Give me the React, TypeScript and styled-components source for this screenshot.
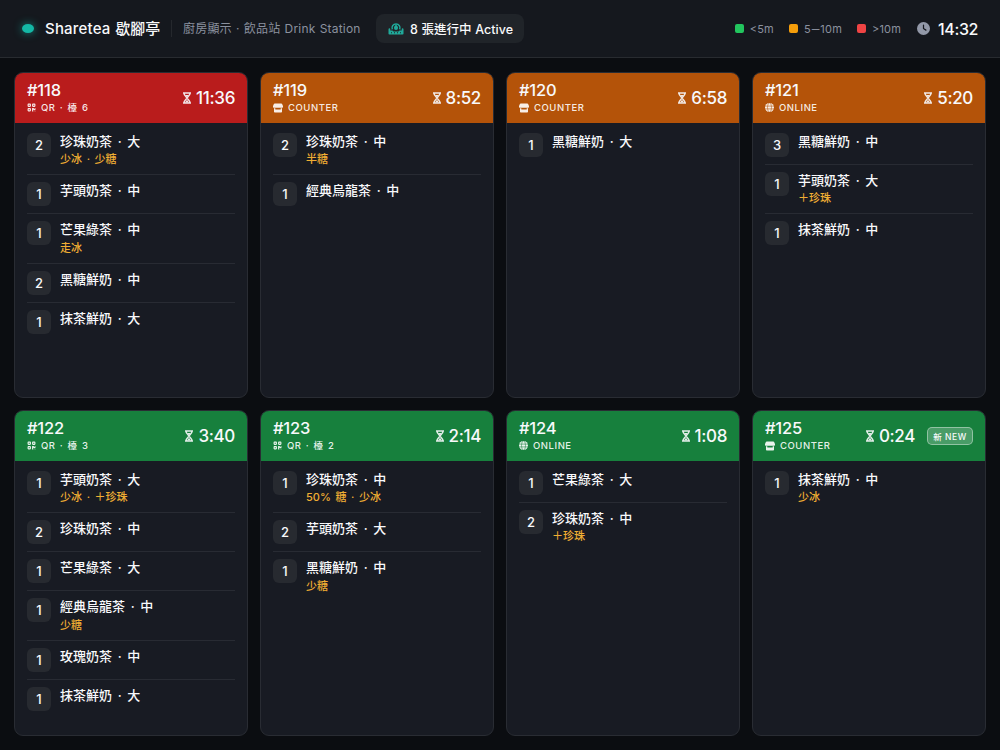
import React from "react";
import styled, { createGlobalStyle } from "styled-components";
import { FaClock, FaQrcode } from "react-icons/fa6";

const latin = 'Inter, "Noto Sans CJK TC", sans-serif';

const GlobalStyle = createGlobalStyle`
  *, *::before, *::after { box-sizing: border-box; }
  body {
    margin: 0;
    background: #0b0d11;
    color: #f8f9fb;
    font-family: ${latin};
    -webkit-font-smoothing: antialiased;
  }
`;

const Page = styled.div`
  height: 750px;
  width: 1000px;
  display: flex;
  flex-direction: column;
  overflow: hidden;
`;

const TopBar = styled.header`
  height: 58px;
  flex: none;
  display: flex;
  align-items: center;
  padding: 0 22px;
  background: #15181e;
  border-bottom: 1px solid #282b30;
  white-space: nowrap;
`;

const StatusDot = styled.span`
  width: 12px;
  height: 9px;
  border-radius: 50%;
  background: #14b8a6;
  box-shadow: 0 0 8px rgba(20, 184, 166, 0.7);
  margin-right: 11px;
`;

const Brand = styled.h1`
  margin: 0;
  width: 115px;
  font-size: 15px;
  line-height: 24px;
  font-weight: 500;
`;

const BrandLatin = styled.span`
  letter-spacing: 0.2px;
  word-spacing: 0.5px;
`;

const Divider = styled.span`
  width: 1px;
  height: 17px;
  margin: 0 11px;
  background: #25282d;
`;

const Station = styled.span`
  width: 177px;
  font-size: 12px;
  line-height: 18px;
  color: #8b919e;
  letter-spacing: 0.2px;
  word-spacing: 0.6px;
`;

const ActivePill = styled.div`
  display: flex;
  align-items: center;
  gap: 6px;
  width: 148px;
  height: 29px;
  margin-left: 16px;
  padding-left: 12px;
  border-radius: 8px;
  background: #202429;
  font-size: 12.5px;
  font-weight: 500;
  word-spacing: 0.4px;
  svg { color: #20a99a; }
`;

const Legend = styled.div`
  display: flex;
  gap: 15px;
  margin-left: auto;
`;

const LegendItem = styled.span<{ $color: string }>`
  display: flex;
  align-items: center;
  font-size: 11px;
  color: #8b919e;
  letter-spacing: 0.2px;
  &::before {
    content: "";
    width: 9px;
    height: 9px;
    margin-right: 6px;
    border-radius: 2px;
    background: ${(p) => p.$color};
  }
`;

const RangeDash = styled.span`
  width: 9.5px;
  text-align: center;
  transform: scaleX(1.4);
`;

const Clock = styled.div`
  display: flex;
  align-items: center;
  gap: 8px;
  margin-left: 16px;
  font-size: 16px;
  font-weight: 500;
  letter-spacing: -0.4px;
  svg { color: #9298a8; }
`;

const Board = styled.main`
  flex: 1;
  min-height: 0;
  display: grid;
  grid-template-columns: repeat(4, 1fr);
  grid-template-rows: repeat(2, 326px);
  gap: 12px;
  padding: 14px;
`;

const Ticket = styled.article`
  display: flex;
  flex-direction: column;
  border: 1px solid #292c33;
  border-radius: 9px;
  background: #181b23;
  overflow: hidden;
`;

const TicketHead = styled.div<{ $color: string }>`
  height: 50px;
  flex: none;
  display: flex;
  align-items: center;
  justify-content: space-between;
  padding: 0 12px;
  background: ${(p) => p.$color};
`;

const OrderNumber = styled.div`
  font-size: 16.5px;
  line-height: 18px;
  font-weight: 500;
  letter-spacing: -0.2px;
`;

const Source = styled.div`
  display: flex;
  align-items: center;
  gap: 5px;
  height: 14px;
  margin: 2px 0 1px;
  font-size: 9.5px;
  font-weight: 500;
  line-height: 14px;
  letter-spacing: 0.55px;
  word-spacing: 1.2px;
  color: rgba(255, 255, 255, 0.9);
`;

const HeadRight = styled.div`
  display: flex;
  align-items: center;
  gap: 12px;
`;

const Timer = styled.div`
  display: flex;
  align-items: center;
  gap: 5px;
  font-size: 17px;
  line-height: 24px;
  font-weight: 500;
  letter-spacing: -0.35px;
  svg { opacity: 0.9; }
`;

const NewBadge = styled.span`
  display: flex;
  align-items: center;
  justify-content: center;
  width: 46px;
  height: 18px;
  border: 1px solid rgba(255, 255, 255, 0.4);
  border-radius: 5px;
  background: rgba(255, 255, 255, 0.22);
  font-size: 8.5px;
  font-weight: 500;
  letter-spacing: 0.5px;
`;

const Lines = styled.ul`
  list-style: none;
  margin: 0;
  padding: 3px 12px;
`;

const Line = styled.li`
  display: flex;
  gap: 9px;
  padding: 7px 0;
  & + & { border-top: 1px solid #282b33; }
`;

const Quantity = styled.span`
  width: 24px;
  height: 24px;
  flex: none;
  border-radius: 6px;
  background: #272a30;
  font-size: 13px;
  line-height: 25px;
  font-weight: 500;
  text-align: center;
`;

const Drink = styled.div`
  font-size: 13px;
  line-height: 17px;
  font-weight: 500;
  white-space: pre;
  word-spacing: 2.2px;
`;

const Note = styled.div`
  margin-top: 2.4px;
  font-size: 11px;
  line-height: 15px;
  font-weight: 500;
  color: #f0ae33;
  word-spacing: 1.7px;
`;

const HourglassIcon = () => (
  <svg width="8" height="12" viewBox="0 0 8 12" fill="none" stroke="currentColor" strokeWidth="1.5">
    <path d="M0 1.100h8M0 10.900h8M1.300 1v1.600L4 6l2.700-3.400V1M1.300 11V9.400L4 6l2.700 3.400V11" />
    <path d="M2 10.500h4L4 7.700zM2.200 2.900h3.600L4 5.200z" fill="currentColor" stroke="none" />
  </svg>
);

const ShopIcon = () => (
  <svg width="10" height="10" viewBox="0 0 10 10" fill="currentColor">
    <path d="M1.700 .5h6.600c.4 0 .6.200.8.600L10 3v.8c0 .6-.4 1-1 1H1c-.6 0-1-.4-1-1V3l.9-1.900c.2-.4.4-.6.8-.6z" />
    <path d="M1 5.200h1.300v1.200h5.400V5.200H9v3.300c0 .7-.4 1.100-1.100 1.100H2.100C1.400 9.600 1 9.200 1 8.500z" />
  </svg>
);

const GlobeIcon = ({ line }: { line: string }) => (
  <svg width="9" height="9" viewBox="0 0 9 9">
    <circle cx="4.500" cy="4.500" r="4.500" fill="currentColor" />
    <g fill="none" stroke={line} strokeWidth=".55">
      <ellipse cx="4.500" cy="4.500" rx="2" ry="4.600" />
      <path d="M0 3.100h9M0 5.900h9" />
    </g>
  </svg>
);

const ActiveIcon = () => (
  <svg width="16" height="13" viewBox="0 0 16 13" fill="currentColor">
    <path d="M4.300 7.400A4 4 0 1 1 11.700 7.400" fill="none" stroke="currentColor" strokeWidth="1.500" />
    <path d="M8 2.600C9.300 4 10 4.900 10 5.900a2 2 0 0 1-4 0C6 4.900 6.700 4 8 2.600z" />
    <path fillRule="evenodd" d="M.5 7.200c0-.6.400-.9.900-.9s.9.300.9.900v1.300h2.200l1 1h5l1-1h2.200V7.200c0-.6.400-.9.900-.9s.9.300.9.900v4.500c0 .5-.3.800-.8.800H1.300c-.5 0-.8-.3-.8-.8zM3 10.300v1h1v-1zM6 10.300v1h1v-1zM9 10.300v1h1v-1zM12 10.300v1h1v-1z" />
  </svg>
);

type SourceKind = "qr" | "counter" | "online";
type Item = [number, string, string?];
interface Order {
  id: number;
  kind: SourceKind;
  source: string;
  time: string;
  color: string;
  fresh?: boolean;
  items: Item[];
}

const RED = "#b91c1c";
const AMBER = "#b45309";
const GREEN = "#17803d";

const orders: Order[] = [
  { id: 118, kind: "qr", source: "QR · 檯 6", time: "11:36", color: RED, items: [[2, "珍珠奶茶 · 大", "少冰 · 少糖"], [1, "芋頭奶茶 · 中"], [1, "芒果綠茶 · 中", "走冰"], [2, "黑糖鮮奶 · 中"], [1, "抹茶鮮奶 · 大"]] },
  { id: 119, kind: "counter", source: "COUNTER", time: "8:52", color: AMBER, items: [[2, "珍珠奶茶 · 中", "半糖"], [1, "經典烏龍茶 · 中"]] },
  { id: 120, kind: "counter", source: "COUNTER", time: "6:58", color: AMBER, items: [[1, "黑糖鮮奶 · 大"]] },
  { id: 121, kind: "online", source: "ONLINE", time: "5:20", color: AMBER, items: [[3, "黑糖鮮奶 · 中"], [1, "芋頭奶茶 · 大", "＋珍珠"], [1, "抹茶鮮奶 · 中"]] },
  { id: 122, kind: "qr", source: "QR · 檯 3", time: "3:40", color: GREEN, items: [[1, "芋頭奶茶 · 大", "少冰 · ＋珍珠"], [2, "珍珠奶茶 · 中"], [1, "芒果綠茶 · 大"], [1, "經典烏龍茶 · 中", "少糖"], [1, "玫瑰奶茶 · 中"], [1, "抹茶鮮奶 · 大"]] },
  { id: 123, kind: "qr", source: "QR · 檯 2", time: "2:14", color: GREEN, items: [[1, "珍珠奶茶 · 中", "50% 糖 · 少冰"], [2, "芋頭奶茶 · 大"], [1, "黑糖鮮奶 · 中", "少糖"]] },
  { id: 124, kind: "online", source: "ONLINE", time: "1:08", color: GREEN, items: [[1, "芒果綠茶 · 大"], [2, "珍珠奶茶 · 中", "＋珍珠"]] },
  { id: 125, kind: "counter", source: "COUNTER", time: "0:24", color: GREEN, fresh: true, items: [[1, "抹茶鮮奶 · 中", "少冰"]] },
];

const SourceIcon = ({ kind, color }: { kind: SourceKind; color: string }) => {
  if (kind === "qr") return <FaQrcode size={9} />;
  if (kind === "online") return <GlobeIcon line={color} />;
  return <ShopIcon />;
};

export default function App() {
  return (
    <Page>
      <GlobalStyle />
      <TopBar>
        <StatusDot />
        <Brand><BrandLatin>Sharetea </BrandLatin>歇腳亭</Brand>
        <Divider />
        <Station>廚房顯示 · 飲品站 Drink Station</Station>
        <ActivePill><ActiveIcon />8 張進行中 Active</ActivePill>
        <Legend>
          <LegendItem $color="#22c55e">&lt;5m</LegendItem>
          <LegendItem $color="#f59e0b">5<RangeDash>–</RangeDash>10m</LegendItem>
          <LegendItem $color="#ef4444">&gt;10m</LegendItem>
        </Legend>
        <Clock><FaClock size={13} />14:32</Clock>
      </TopBar>
      <Board>
        {orders.map((o) => (
          <Ticket key={o.id}>
            <TicketHead $color={o.color}>
              <div>
                <OrderNumber>#{o.id}</OrderNumber>
                <Source><SourceIcon kind={o.kind} color={o.color} />{o.source}</Source>
              </div>
              <HeadRight>
                <Timer><HourglassIcon />{o.time}</Timer>
                {o.fresh && <NewBadge>新 NEW</NewBadge>}
              </HeadRight>
            </TicketHead>
            <Lines>
              {o.items.map(([qty, name, note], i) => (
                <Line key={i}>
                  <Quantity>{qty}</Quantity>
                  <div>
                    <Drink>{name}</Drink>
                    {note && <Note>{note}</Note>}
                  </div>
                </Line>
              ))}
            </Lines>
          </Ticket>
        ))}
      </Board>
    </Page>
  );
}
